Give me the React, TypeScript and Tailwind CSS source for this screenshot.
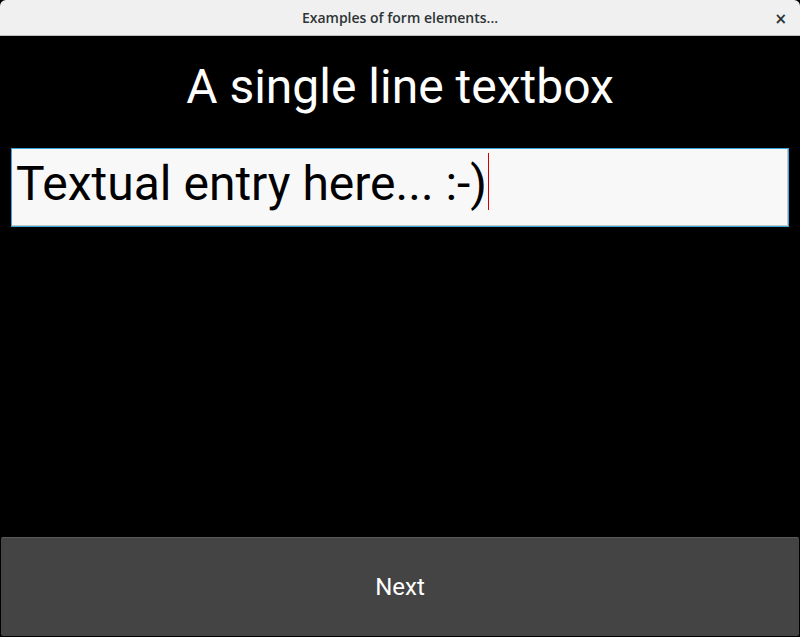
export default function App() {
  return (
    <div className="h-[637px] w-[800px] flex flex-col bg-black overflow-hidden">
      {/* window title bar */}
      <div className="h-[36px] shrink-0 relative flex items-center justify-center bg-[#f0f0f0] border-b border-[#bfbfbf] rounded-t-[6px]">
        <span className="text-[14px] font-semibold text-[#2e3436] font-['Open_Sans',sans-serif]">
          Examples of form elements...
        </span>
        <span className="absolute right-[13px] top-[8px] text-[15px] font-bold text-[#2e3436] font-['DejaVu_Sans',sans-serif]">
          ×
        </span>
      </div>

      <div className="flex-1 flex flex-col font-['Roboto',sans-serif]">
        <h1 className="text-center text-white text-[48px] leading-none pt-[27px]">
          A single line textbox
        </h1>

        <div className="px-[11px] pt-[37px]">
          <div className="h-[79px] border border-[#3aa5dc] bg-[#f8f8f8] shadow-[inset_-1px_-1px_0_#c8c8c8] flex items-start pl-[4px]">
            <span className="mt-[11px] text-black text-[48px] leading-none whitespace-pre">
              Textual entry here... :-)
            </span>
            <span className="mt-[4px] ml-[1px] w-[1px] h-[57px] bg-[#d00000]" />
          </div>
        </div>

        <div className="flex-1" />

        <button className="mx-[1px] mb-[1px] h-[99px] shrink-0 rounded-[2px] bg-[#444444] border-t border-[#5a5a5a] text-white text-[24px]">
          Next
        </button>
      </div>
    </div>
  );
}
